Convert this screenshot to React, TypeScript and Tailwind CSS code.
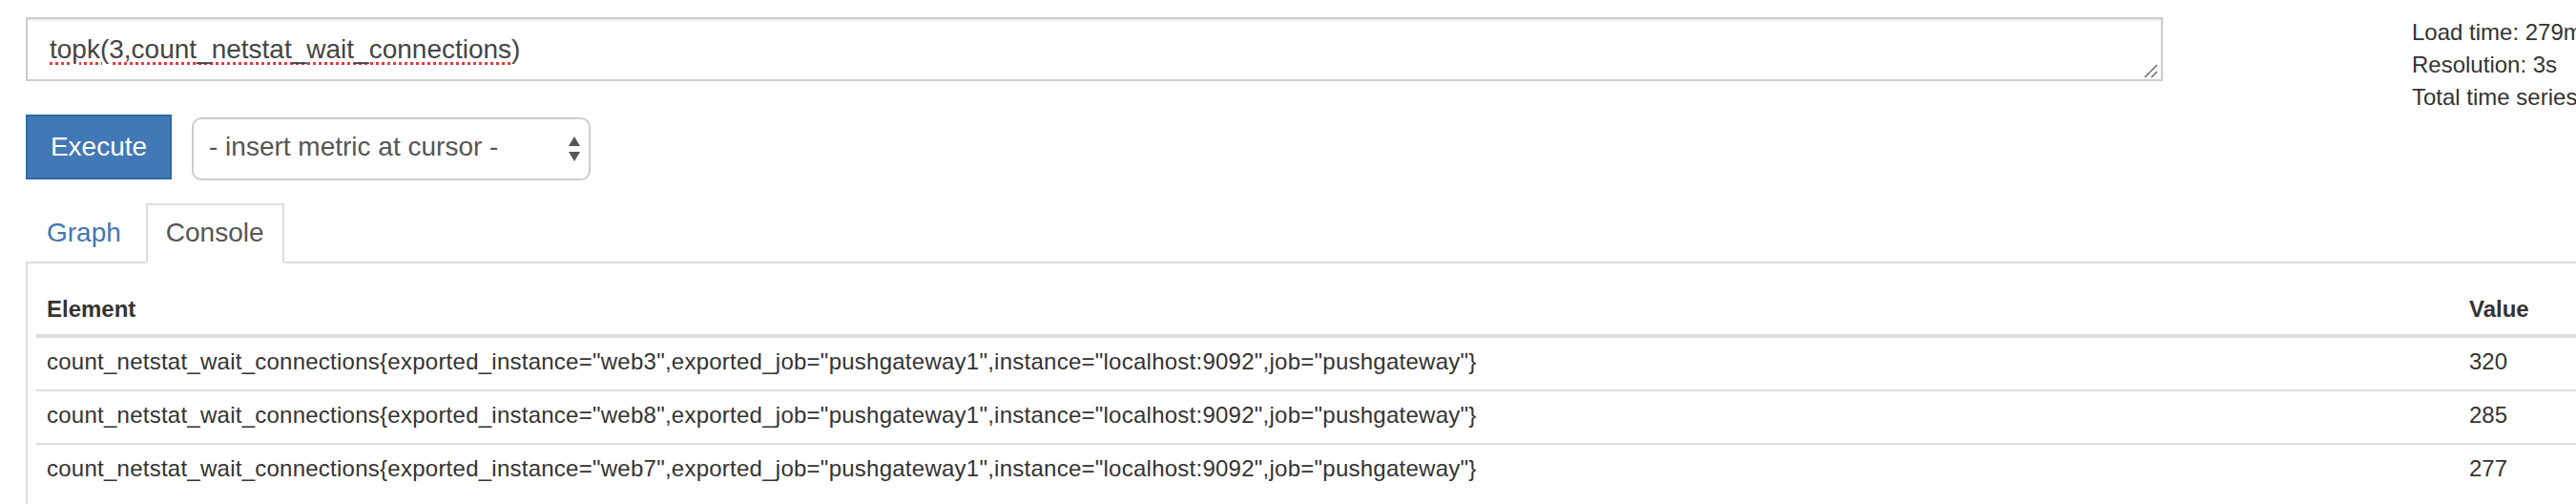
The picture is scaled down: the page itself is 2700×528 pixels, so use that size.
import React from "react";

const rows = [
  { metric: 'count_netstat_wait_connections{exported_instance="web3",exported_job="pushgateway1",instance="localhost:9092",job="pushgateway"}', value: "320" },
  { metric: 'count_netstat_wait_connections{exported_instance="web8",exported_job="pushgateway1",instance="localhost:9092",job="pushgateway"}', value: "285" },
  { metric: 'count_netstat_wait_connections{exported_instance="web7",exported_job="pushgateway1",instance="localhost:9092",job="pushgateway"}', value: "277" },
];

export default function App() {
  return (
    <div className="w-[2700px] h-[528px] overflow-hidden bg-white text-[#333] font-['Liberation_Sans',Arial,sans-serif]">
      <div className="w-[3000px] pl-[27px]">
        {/* query + stats */}
        <div className="flex items-start h-[85px] pt-[18px]">
          <div className="relative w-[2240px] h-[67px] border-2 border-[#cccccc] bg-white shadow-[inset_0_2px_2px_rgba(0,0,0,0.075)] pl-[23px] pt-[12px] text-[28px] leading-[40px] text-[#444]">
            <span className="underline decoration-dotted decoration-[#e5393f] decoration-3 underline-offset-4">
              topk(3,count_netstat_wait_connections
            </span>
            )
            {/* resize handle */}
            <svg className="absolute right-[2px] bottom-[1px]" width="16" height="16" viewBox="0 0 16 16">
              <line x1="1" y1="15" x2="14" y2="2" stroke="#666" strokeWidth="1.5" />
              <line x1="8" y1="15" x2="14" y2="9" stroke="#666" strokeWidth="1.5" />
            </svg>
          </div>
          <div className="ml-[261px] -mt-[1px] text-[24px] leading-[34px] text-[#333] whitespace-nowrap">
            <div>Load time: 279ms</div>
            <div>Resolution: 3s</div>
            <div>Total time series: 3</div>
          </div>
        </div>

        {/* execute + metric select */}
        <div className="flex items-start gap-[21px] mt-[35px]">
          <button className="w-[153px] h-[68px] bg-[#4178b5] border-2 border-[#2f6aa4] text-white text-[28px] leading-[40px] flex items-center justify-center">
            Execute
          </button>
          <div className="relative mt-[3px] w-[418px] h-[66px] border-2 border-[#cccccc] rounded-[10px] bg-white flex items-center pl-[16px] pb-[4px] text-[28px] text-[#555] whitespace-nowrap">
            - insert metric at cursor -
            <svg className="absolute right-[8px] top-[17px]" width="14" height="28" viewBox="0 0 14 28">
              <path d="M7 1 L13 11 L1 11 Z" fill="#555" />
              <path d="M1 17 L13 17 L7 27 Z" fill="#555" />
            </svg>
          </div>
        </div>

        {/* tabs */}
        <ul className="flex mt-[24px] border-b-2 border-[#dddddd] text-[28px] leading-[40px]">
          <li className="mr-[4px] -mb-[2px]">
            <span className="block border-2 border-transparent px-[20px] pt-[9px] pb-[10px] text-[#3f78b5]">Graph</span>
          </li>
          <li className="-mb-[2px]">
            <span className="block border-2 border-[#dddddd] border-b-white bg-white px-[19px] pt-[9px] pb-[10px] text-[#555]">Console</span>
          </li>
        </ul>

        {/* console panel */}
        <div className="h-[300px] border-l-2 border-[#dddddd] pl-[9px] pt-[22px]">
          <table className="w-[2900px] text-[24px] leading-[34px] text-[#333]">
            <thead>
              <tr>
                <th className="w-[2539px] text-left font-bold pl-[11px] pt-[9px] pb-[9px] border-b-4 border-[#dddddd]">Element</th>
                <th className="text-left font-bold pl-[11px] pt-[9px] pb-[9px] border-b-4 border-[#dddddd]">Value</th>
              </tr>
            </thead>
            <tbody>
              {rows.map((r, i) => (
                <tr key={r.value} className={i > 0 ? "border-t-2 border-[#dddddd]" : ""}>
                  <td className="pl-[11px] pt-[8px] pb-[12px] whitespace-nowrap tracking-[0.25px]">{r.metric}</td>
                  <td className="pl-[11px] pt-[8px] pb-[12px]">{r.value}</td>
                </tr>
              ))}
            </tbody>
          </table>
        </div>
      </div>
    </div>
  );
}
